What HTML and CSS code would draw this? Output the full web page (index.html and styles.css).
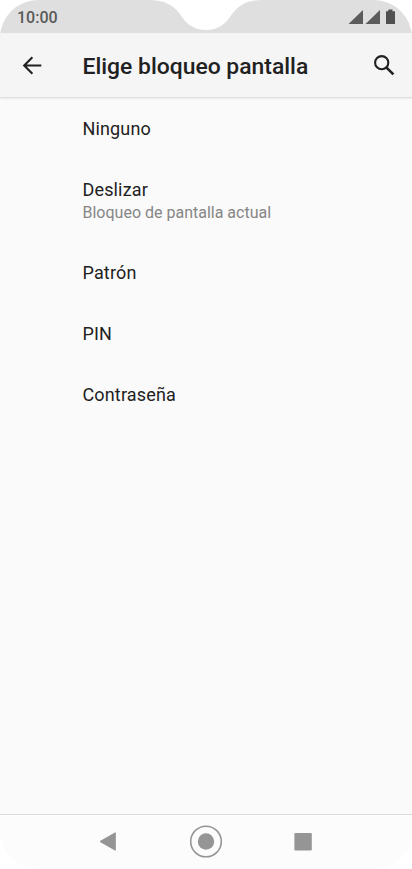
FILE: index.html
```html
<!DOCTYPE html>
<html lang="es">
<head>
    <meta charset="UTF-8">
    <meta name="viewport" content="width=device-width, initial-scale=1.0">
    <title>Elige bloqueo pantalla</title>
    <link rel="stylesheet" href="styles.css">
</head>
<body>
    <div id="phone">
        <div id="status">
            <svg class="notch" width="112" height="31" viewBox="0 0 112 31">
                <path d="M0 0C14 0 23 5 30 14C36 24 44 30 56 30C68 30 76 24 82 14C89 5 98 0 112 0Z" fill="#fff"/>
            </svg>
            <span class="time">10:00</span>
            <svg class="signals" width="48" height="16" viewBox="0 0 48 16">
                <path d="M.5 15L15 1V15ZM17.5 15L32 1V15Z" fill="#5c5c5c"/>
                <path d="M38 2.2H40.3V.5H44.5V2.2H47V15H38Z" fill="#505050"/>
            </svg>
        </div>
        <header>
            <svg class="back" width="20" height="20" viewBox="0 0 20 20">
                <path d="M19.3 9.5H2M10.4 1.3L2.2 9.5L10.4 17.7" fill="none" stroke="#212121" stroke-width="2.1"/>
            </svg>
            <h1>Elige bloqueo pantalla</h1>
            <svg class="search" width="22" height="22" viewBox="0 0 22 22">
                <circle cx="8.7" cy="7.7" r="6.6" fill="none" stroke="#212121" stroke-width="2.1"/>
                <path d="M13.3 12.3L20.4 19.4" stroke="#212121" stroke-width="2.6"/>
            </svg>
        </header>
        <ul id="list">
            <li>Ninguno</li>
            <li>Deslizar<small>Bloqueo de pantalla actual</small></li>
            <li>Patrón</li>
            <li>PIN</li>
            <li>Contraseña</li>
        </ul>
        <nav>
            <svg width="20" height="20" viewBox="0 0 20 20">
                <path d="M3 9.5L18.3 .8V18.2Z" fill="#959595" stroke="#959595" stroke-linejoin="round"/>
            </svg>
            <svg width="34" height="34" viewBox="0 0 34 34">
                <circle cx="17" cy="16.5" r="15.3" fill="none" stroke="#959595" stroke-width="1.6"/>
                <circle cx="17" cy="16.5" r="8.2" fill="#959595"/>
            </svg>
            <svg width="18" height="18" viewBox="0 0 18 18">
                <rect x=".4" y="0" width="17.4" height="17.4" rx="1.2" fill="#959595"/>
            </svg>
        </nav>
    </div>
</body>
</html>
```

FILE: styles.css
```css
* {margin: 0; padding: 0; box-sizing: border-box;}
body {background: #fff; font-family: Roboto, sans-serif; color: #212121;}
svg {display: block;}
#phone {width: 412px; height: 869px; display: flex; flex-direction: column;
    background: #fafafa; border-radius: 38px; overflow: hidden;}

#status {position: relative; height: 33px; padding: 0 16px 0 17px; background: #dfdfdf;
    display: flex; justify-content: space-between; align-items: center;}
#status .notch {position: absolute; left: 150px; top: 0;}
#status .time {font-size: 16px; font-weight: 500; line-height: 33px; color: #5a5a5a; padding-top: 2px;}

header {height: 64px; padding: 1px 17px 0 22px; background: #f5f5f5;
    box-shadow: 0 1px 2px #d4d4d4; display: flex; align-items: center;}
header h1 {flex: 1; margin-left: 40.5px; font-size: 22.9px; font-weight: 500; line-height: 30px; padding-top: 3px;}

#list {flex: 1; list-style: none; padding-top: 2px;}
#list li {padding: 19px 0 20px 82.5px; font-size: 18px; line-height: 22px; letter-spacing: .15px;}
#list small {display: block; margin: 1px 0 -1px; font-size: 16px; letter-spacing: 0; color: #868686;}

nav {height: 55px; padding: 0 100px 1px 97px; background: #fcfcfc; border-top: 1px solid #dcdcdc;
    display: flex; justify-content: space-between; align-items: center;}
```
